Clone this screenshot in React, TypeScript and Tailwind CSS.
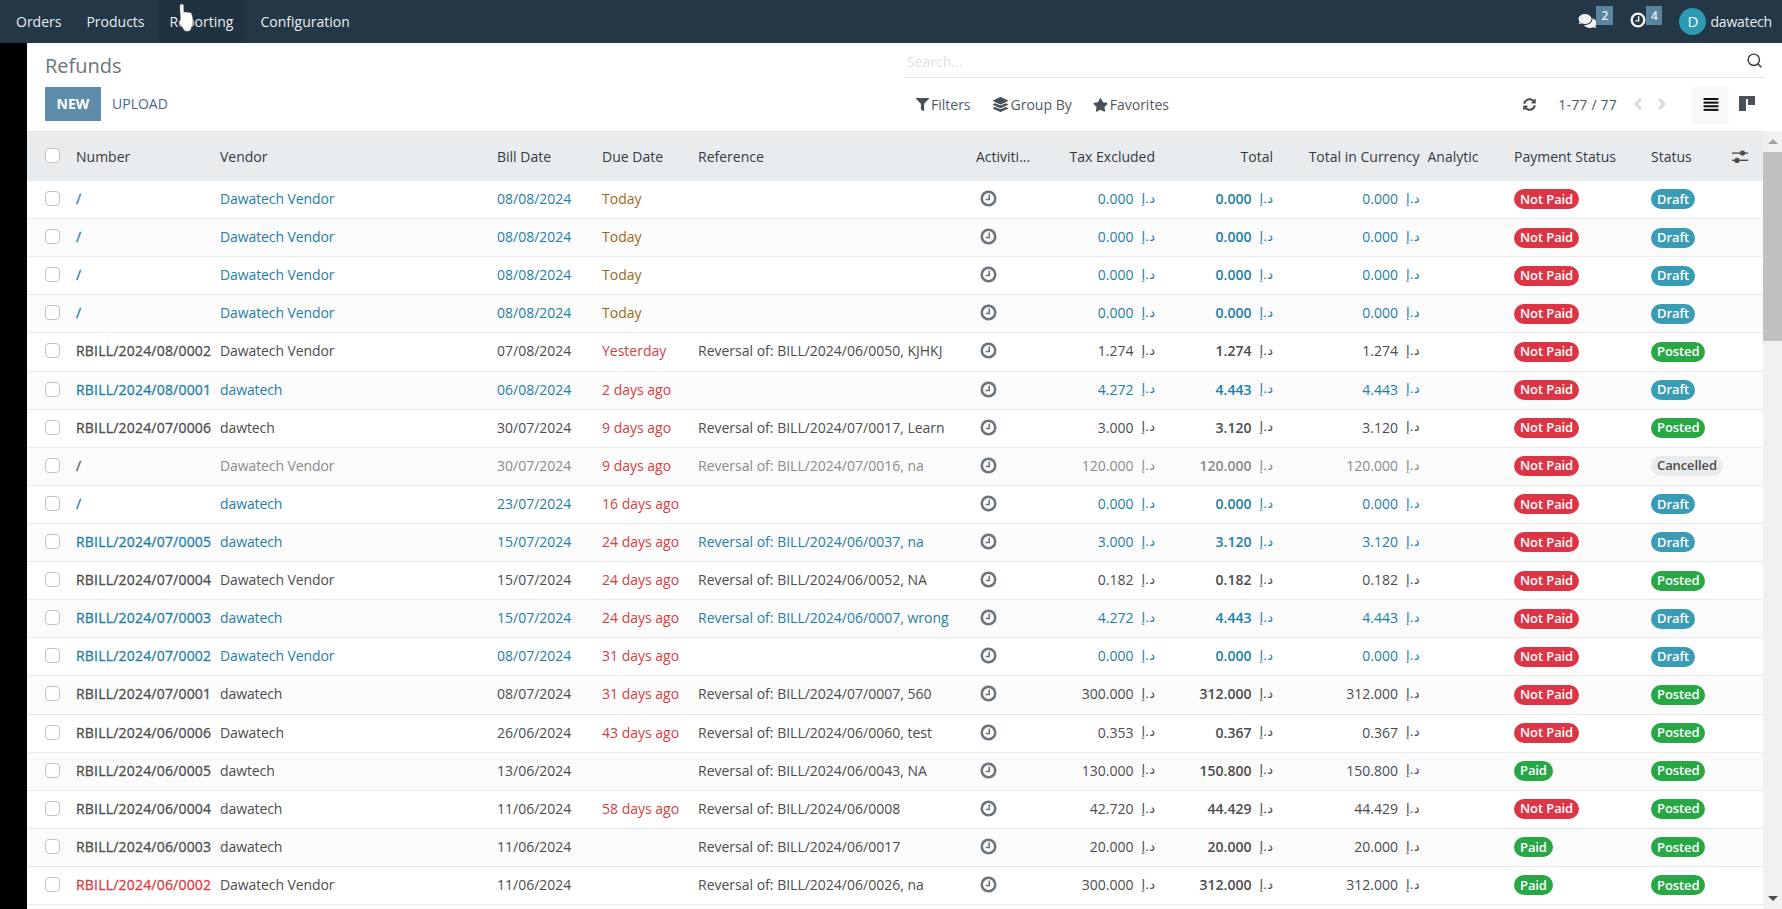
import { Search } from 'lucide-react';
import { FaAngleLeft, FaAngleRight, FaComments, FaFilter, FaLayerGroup, FaStar, FaSyncAlt } from 'react-icons/fa';

type Tone = 'link' | 'dark' | 'muted';
type Payment = 'Not Paid' | 'Paid';
type Status = 'Draft' | 'Posted' | 'Cancelled';

interface Bill {
  number: string;
  vendor: string;
  billDate: string;
  due: string;
  reference: string;
  taxExcluded: string;
  total: string;
  payment: Payment;
  status: Status;
  numberRed?: boolean;
}

const bills: Bill[] = [
  { number: '/', vendor: 'Dawatech Vendor', billDate: '08/08/2024', due: 'Today', reference: '', taxExcluded: '0.000', total: '0.000', payment: 'Not Paid', status: 'Draft' },
  { number: '/', vendor: 'Dawatech Vendor', billDate: '08/08/2024', due: 'Today', reference: '', taxExcluded: '0.000', total: '0.000', payment: 'Not Paid', status: 'Draft' },
  { number: '/', vendor: 'Dawatech Vendor', billDate: '08/08/2024', due: 'Today', reference: '', taxExcluded: '0.000', total: '0.000', payment: 'Not Paid', status: 'Draft' },
  { number: '/', vendor: 'Dawatech Vendor', billDate: '08/08/2024', due: 'Today', reference: '', taxExcluded: '0.000', total: '0.000', payment: 'Not Paid', status: 'Draft' },
  { number: 'RBILL/2024/08/0002', vendor: 'Dawatech Vendor', billDate: '07/08/2024', due: 'Yesterday', reference: 'Reversal of: BILL/2024/06/0050, KJHKJ', taxExcluded: '1.274', total: '1.274', payment: 'Not Paid', status: 'Posted' },
  { number: 'RBILL/2024/08/0001', vendor: 'dawatech', billDate: '06/08/2024', due: '2 days ago', reference: '', taxExcluded: '4.272', total: '4.443', payment: 'Not Paid', status: 'Draft' },
  { number: 'RBILL/2024/07/0006', vendor: 'dawtech', billDate: '30/07/2024', due: '9 days ago', reference: 'Reversal of: BILL/2024/07/0017, Learn', taxExcluded: '3.000', total: '3.120', payment: 'Not Paid', status: 'Posted' },
  { number: '/', vendor: 'Dawatech Vendor', billDate: '30/07/2024', due: '9 days ago', reference: 'Reversal of: BILL/2024/07/0016, na', taxExcluded: '120.000', total: '120.000', payment: 'Not Paid', status: 'Cancelled' },
  { number: '/', vendor: 'dawatech', billDate: '23/07/2024', due: '16 days ago', reference: '', taxExcluded: '0.000', total: '0.000', payment: 'Not Paid', status: 'Draft' },
  { number: 'RBILL/2024/07/0005', vendor: 'dawatech', billDate: '15/07/2024', due: '24 days ago', reference: 'Reversal of: BILL/2024/06/0037, na', taxExcluded: '3.000', total: '3.120', payment: 'Not Paid', status: 'Draft' },
  { number: 'RBILL/2024/07/0004', vendor: 'Dawatech Vendor', billDate: '15/07/2024', due: '24 days ago', reference: 'Reversal of: BILL/2024/06/0052, NA', taxExcluded: '0.182', total: '0.182', payment: 'Not Paid', status: 'Posted' },
  { number: 'RBILL/2024/07/0003', vendor: 'dawatech', billDate: '15/07/2024', due: '24 days ago', reference: 'Reversal of: BILL/2024/06/0007, wrong', taxExcluded: '4.272', total: '4.443', payment: 'Not Paid', status: 'Draft' },
  { number: 'RBILL/2024/07/0002', vendor: 'Dawatech Vendor', billDate: '08/07/2024', due: '31 days ago', reference: '', taxExcluded: '0.000', total: '0.000', payment: 'Not Paid', status: 'Draft' },
  { number: 'RBILL/2024/07/0001', vendor: 'dawatech', billDate: '08/07/2024', due: '31 days ago', reference: 'Reversal of: BILL/2024/07/0007, 560', taxExcluded: '300.000', total: '312.000', payment: 'Not Paid', status: 'Posted' },
  { number: 'RBILL/2024/06/0006', vendor: 'Dawatech', billDate: '26/06/2024', due: '43 days ago', reference: 'Reversal of: BILL/2024/06/0060, test', taxExcluded: '0.353', total: '0.367', payment: 'Not Paid', status: 'Posted' },
  { number: 'RBILL/2024/06/0005', vendor: 'dawtech', billDate: '13/06/2024', due: '', reference: 'Reversal of: BILL/2024/06/0043, NA', taxExcluded: '130.000', total: '150.800', payment: 'Paid', status: 'Posted' },
  { number: 'RBILL/2024/06/0004', vendor: 'dawatech', billDate: '11/06/2024', due: '58 days ago', reference: 'Reversal of: BILL/2024/06/0008', taxExcluded: '42.720', total: '44.429', payment: 'Not Paid', status: 'Posted' },
  { number: 'RBILL/2024/06/0003', vendor: 'dawatech', billDate: '11/06/2024', due: '', reference: 'Reversal of: BILL/2024/06/0017', taxExcluded: '20.000', total: '20.000', payment: 'Paid', status: 'Posted' },
  { number: 'RBILL/2024/06/0002', vendor: 'Dawatech Vendor', billDate: '11/06/2024', due: '', reference: 'Reversal of: BILL/2024/06/0026, na', taxExcluded: '300.000', total: '312.000', payment: 'Paid', status: 'Posted', numberRed: true },
];

const rowGrid = 'grid grid-cols-[45px_144px_277px_105px_96px_278px_76px_111px_118px_146.5px_86.5px_137px_78px_38px] items-center';
const fontStack = "font-['Open_Sans','DejaVu_Sans',sans-serif]";

const toneClass: Record<Tone, string> = {
  link: 'text-[#1f7ea6]',
  dark: 'text-[#4c4c4c]',
  muted: 'text-[#8a8a8a]',
};

function ClockIcon({ className }: { className?: string }) {
  return (
    <svg viewBox="0 0 24 24" fill="none" className={className}>
      <circle cx="12" cy="12" r="9.5" stroke="currentColor" strokeWidth="3.6" />
      <path d="M13 6.5v6.8H8" stroke="currentColor" strokeWidth="2.2" />
    </svg>
  );
}

function Checkbox() {
  return <span className="block w-[15px] h-[15px] rounded-[4px] border border-[#c2c2c2] bg-white" />;
}

function Money({ value, bold }: { value: string; bold?: boolean }) {
  return (
    <div className={`flex justify-end items-center pr-1 ${bold ? 'font-semibold' : ''}`}>
      <span>{value}</span>
      <span className="ml-[8px] font-normal font-['DejaVu_Sans',sans-serif] text-[13px]">د.إ</span>
    </div>
  );
}

function Pill({ label }: { label: Payment | Status }) {
  const colors: Record<Payment | Status, string> = {
    'Not Paid': 'bg-[#dc3545] text-white',
    Paid: 'bg-[#28a745] text-white',
    Draft: 'bg-[#3a9bb5] text-white',
    Posted: 'bg-[#28a745] text-white',
    Cancelled: 'bg-[#e9ecef] text-[#4c4c4c]',
  };
  return (
    <span className={`inline-flex items-center h-[20px] px-[6px] rounded-full text-[13px] font-semibold tracking-[-0.1px] ${colors[label]}`}>
      {label}
    </span>
  );
}

function BillRow({ bill, index }: { bill: Bill; index: number }) {
  const tone: Tone = bill.status === 'Draft' ? 'link' : bill.status === 'Cancelled' ? 'muted' : 'dark';
  const dueClass = bill.due === 'Today' ? 'text-[#9a6a1c]' : 'text-[#d23f3f]';
  const numberClass = bill.numberRed ? 'text-[#d23f3f]' : tone === 'muted' ? 'text-[#5c5c5c]' : toneClass[tone];
  return (
    <div className={`${rowGrid} h-[38.11px] pb-[2px] border-b border-[#e9ecef] ${toneClass[tone]} ${index % 2 ? 'bg-[#fbfbfb]' : 'bg-white'}`}>
      <div className="pl-[18px]"><Checkbox /></div>
      <div className={`px-1 tracking-[0.2px] [-webkit-text-stroke:0.3px] whitespace-nowrap ${numberClass}`}>{bill.number}</div>
      <div className="px-1 whitespace-nowrap tracking-[-0.1px]">{bill.vendor}</div>
      <div className="px-1 whitespace-nowrap">{bill.billDate}</div>
      <div className={`px-1 whitespace-nowrap ${dueClass}`}>{bill.due}</div>
      <div className="px-1 whitespace-nowrap">{bill.reference}</div>
      <div className="pl-[8px]"><ClockIcon className="w-[17px] h-[17px] text-[#6c757d]" /></div>
      <Money value={bill.taxExcluded} />
      <Money value={bill.total} bold />
      <Money value={bill.total} />
      <div />
      <div className="px-1"><Pill label={bill.payment} /></div>
      <div className="px-1"><Pill label={bill.status} /></div>
      <div />
    </div>
  );
}

function SlidersIcon() {
  return (
    <svg viewBox="0 0 16 16" className="w-[16px] h-[16px] text-[#4c4c4c]" fill="currentColor">
      <rect x="0" y="3.4" width="16" height="1.4" />
      <circle cx="10.5" cy="4" r="2.6" />
      <rect x="0" y="10.6" width="16" height="1.4" />
      <circle cx="5" cy="11.4" r="2.6" />
    </svg>
  );
}

function HandCursor() {
  return (
    <svg viewBox="0 0 16 30" className="absolute left-[179px] top-[3px] w-[16px] h-[30px]">
      <path
        d="M.8 3a2 2 0 0 1 4 0v6.500c1-1 2.200-.8 2.700 0 .8-.7 2.100-.6 2.600.3.900-.6 2.300-.2 2.600 1 .6 2 1.300 4.500 1.200 7-.1 3-.9 5.500-1.800 7.700-.5 1.700-1.500 2.700-3 2.700H7c-1.200 0-2-.8-2.500-2L.8 20.500c-.8-1.300-.6-2.800.5-3l.2-.2z"
        fill="#fff"
        stroke="#4a4a4a"
        strokeWidth=".4"
      />
    </svg>
  );
}

export default function App() {
  return (
    <div className={`relative flex flex-col h-screen overflow-hidden bg-white text-[14px] text-[#4c4c4c] ${fontStack}`}>
      {/* top bar */}
      <header className="flex items-center justify-between h-[43px] flex-shrink-0 bg-[#243746] text-[#e6edf2] text-[14px]">
        <nav className="flex items-stretch h-full">
          <span className="flex items-center pl-[16px] pr-[12px]">Orders</span>
          <span className="flex items-center pl-[13px] pr-[14px]">Products</span>
          <span className="flex items-center px-[11px] bg-[#20323f]">Reporting</span>
          <span className="flex items-center pl-[16px] pr-4">Configuration</span>
        </nav>
        <div className="flex items-center h-full">
          <div className="relative w-[35px] h-full">
            <FaComments className="absolute left-0 top-[13px] w-[19px] h-[16px] text-[#f1f1f1]" />
            <span className="absolute left-[18px] top-[6px] flex items-center justify-center w-[17px] h-[19px] bg-[#5a84a0] text-[12px] font-semibold">2</span>
          </div>
          <div className="relative w-[49px] ml-[17px] h-full">
            <ClockIcon className="absolute left-0 top-[12px] w-[16px] h-[16px] text-[#f5f5f5]" />
            <span className="absolute left-[16px] top-[6px] flex items-center justify-center w-[16px] h-[19px] bg-[#5a84a0] text-[12px] font-semibold">4</span>
          </div>
          <span className="flex items-center justify-center w-[27px] h-[27px] rounded-full bg-[#2b9bb3] text-[15px] text-white">D</span>
          <span className="ml-[4px] mr-[10px] tracking-[-0.2px]">dawatech</span>
        </div>
      </header>

      <div className="flex flex-1 min-h-0">
        <div className="w-[27px] flex-shrink-0 bg-black" />
        <main className="flex-1 min-w-0 flex flex-col">
          {/* control panel */}
          <div className="flex justify-between h-[88px] flex-shrink-0 pl-[18px] pr-[18px]">
            <div>
              <div className="h-[44px] pt-[8px] text-[20px] text-[#6c757d] leading-[30px]">Refunds</div>
              <div className="flex items-center">
                <button className="h-[34px] w-[56px] pb-[2px] bg-[#5e8cab] text-white font-bold">NEW</button>
                <button className="ml-[11px] pb-[2px] text-[#4a6590] font-medium">UPLOAD</button>
              </div>
            </div>
            <div className="w-[859px]">
              <div className="flex items-center justify-between h-[35px] border-b border-[#dee2e6] pl-[2px] pr-[1px]">
                <span className="pt-[2px] text-[#dcdfe3]">Search...</span>
                <Search size={17} className="text-[#343a40]" />
              </div>
              <div className="flex items-center justify-between h-[37px] mt-[9px] pl-[11px]">
                <div className="flex items-center pb-[2px] text-[#4f5a64]">
                  <FaFilter className="w-[13px] h-[13px] mr-[2px] text-[#495057]" />
                  <span>Filters</span>
                  <FaLayerGroup className="w-[15px] h-[15px] ml-[22px] mr-[3px] text-[#495057]" />
                  <span>Group By</span>
                  <FaStar className="w-[15px] h-[14px] ml-[21px] mr-[2px] text-[#495057]" />
                  <span>Favorites</span>
                </div>
                <div className="flex items-stretch h-full">
                  <div className="flex items-center pb-[3px]">
                    <FaSyncAlt className="w-[13px] h-[13px] text-[#495057]" />
                    <span className="ml-[22px] tracking-[0.2px] text-[#4f5a70]">1-77 / 77</span>
                    <FaAngleLeft className="ml-[14px] w-[14px] h-[18px] text-[#d8d8d8]" />
                    <FaAngleRight className="ml-[10px] w-[14px] h-[18px] text-[#d8d8d8]" />
                  </div>
                  <span className="flex items-center justify-center ml-[23px] pb-[3px] w-[37px] bg-[#f8f9fa]">
                    <svg viewBox="0 0 16 14" className="w-[16px] h-[13px]" fill="#111">
                      <rect y="0" width="16" height="2.200" />
                      <rect y="3.900" width="16" height="2.200" />
                      <rect y="7.800" width="16" height="2.200" />
                      <rect y="11.700" width="16" height="2.200" />
                    </svg>
                  </span>
                  <span className="flex items-center ml-[10px] mr-[9px] pb-[4px]">
                    <svg viewBox="0 0 16 15" className="w-[16px] h-[15px]" fill="#495057">
                      <rect width="16" height="3" />
                      <rect y="3" width="7" height="12" />
                      <rect x="9" y="3" width="7" height="6" />
                    </svg>
                  </span>
                </div>
              </div>
            </div>
          </div>

          {/* list */}
          <div className="flex flex-1 min-h-0">
            <div className="flex-1 min-w-0 overflow-hidden">
              <div className={`${rowGrid} h-[50px] border-t border-[#dee2e6] bg-[#e9ecef] text-[#343a40]`}>
                <div className="pl-[18px] pb-[3px]"><Checkbox /></div>
                <div className="px-1">Number</div>
                <div className="px-1">Vendor</div>
                <div className="px-1">Bill Date</div>
                <div className="px-1">Due Date</div>
                <div className="px-1">Reference</div>
                <div className="px-1">Activiti...</div>
                <div className="px-1 text-right">Tax Excluded</div>
                <div className="px-1 text-right">Total</div>
                <div className="px-1 text-right whitespace-nowrap">Total in Currency</div>
                <div className="px-1">Analytic</div>
                <div className="px-1">Payment Status</div>
                <div className="px-1">Status</div>
                <div className="pl-[7px]"><SlidersIcon /></div>
              </div>
              {bills.map((bill, index) => (
                <BillRow key={index} bill={bill} index={index} />
              ))}
            </div>

            {/* scrollbar */}
            <div className="flex flex-col items-center w-[19px] flex-shrink-0 bg-[#f1f1f1]">
              <div className="flex items-center justify-center h-[21px] w-full">
                <span className="w-0 h-0 border-x-[5px] border-x-transparent border-b-[5px] border-b-[#a3a3a3]" />
              </div>
              <div className="w-full h-[189px] bg-[#c1c1c1]" />
              <div className="flex-1" />
              <div className="flex items-center justify-center h-[21px] w-full">
                <span className="w-0 h-0 border-x-[5px] border-x-transparent border-t-[5px] border-t-[#505050]" />
              </div>
            </div>
          </div>
        </main>
      </div>

      <HandCursor />
    </div>
  );
}
